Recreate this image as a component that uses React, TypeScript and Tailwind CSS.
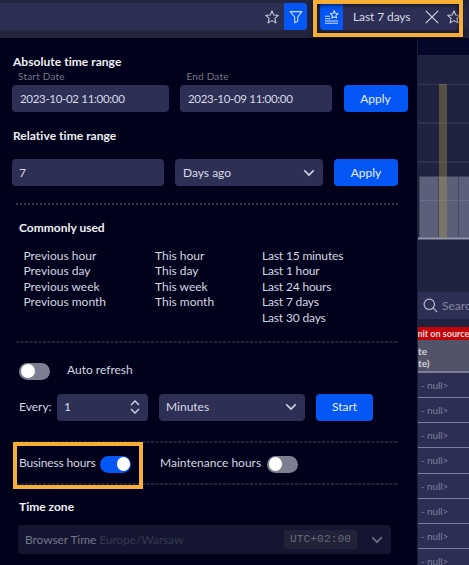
import React from "react";

const FIELD = "flex h-[27px] shrink-0 items-center rounded-[4px] bg-[#2d2f55] text-[#d9dae6]";
const BUTTON =
  "flex h-[27px] shrink-0 items-center justify-center rounded-[4px] bg-[#0557f5] text-[12px] leading-none text-[#e6edff]";

function Star({ className = "" }: { className?: string }) {
  return (
    <svg className={`shrink-0 ${className}`} width="14" height="14" viewBox="0 0 14 14" fill="none" stroke="#c6c8dc" strokeWidth="1.1" strokeLinejoin="round">
      <path d="M7 .9l1.8 4.1 4.4.4-3.3 3 1 4.5L7 10.6l-3.9 2.3 1-4.5-3.3-3 4.4-.4z" />
    </svg>
  );
}

function Chevron({ color = "#d4d6e4" }: { color?: string }) {
  return (
    <svg className="shrink-0" width="12" height="8" viewBox="0 0 12 8" fill="none" stroke={color} strokeWidth="1.6">
      <path d="M1.2 1.2L6 6l4.8-4.8" />
    </svg>
  );
}

function Dashes({ dotted = false }: { dotted?: boolean }) {
  return (
    <svg className="ml-4 block shrink-0" width="383" height="2" stroke="#454860">
      <path d="M0 1H383" strokeWidth={dotted ? 1.5 : 1} strokeDasharray={dotted ? "2 2" : "3 1.5"} />
    </svg>
  );
}

function Toggle({ on = false }: { on?: boolean }) {
  return (
    <span className={`flex h-[17px] w-[31px] shrink-0 items-center rounded-full px-[2px] ${on ? "justify-end bg-[#0557f5] pr-[1px]" : "bg-[#7c7e91]"}`}>
      <span className="size-[13.5px] rounded-full bg-white" />
    </span>
  );
}

function TopBar() {
  return (
    <header className="flex h-[38px] w-full shrink-0 items-start bg-[#23243f] pt-[3px]">
      <div className="flex h-[27px] w-[307px] shrink-0 items-center overflow-hidden rounded-r-[4px] bg-[#2c2e54]">
        <Star className="ml-[265px]" />
        <span className="ml-auto flex h-full w-[23px] items-center justify-center bg-[#0557f5]">
          <svg width="14" height="14" viewBox="0 0 14 14" fill="none" stroke="#c9dcff" strokeWidth="1.1" strokeLinejoin="round">
            <path d="M1.2 1.6h11.6L8.7 7v4.2l-3 1.6V7z" />
          </svg>
        </span>
      </div>
      <div className="ml-[13px] flex h-[27px] w-[146px] shrink-0 items-center overflow-hidden rounded-[4px] bg-[#2c2e54]">
        <span className="flex h-full w-[23px] shrink-0 items-center justify-center bg-[#0557f5]">
          <svg width="14" height="14" viewBox="0 0 14 14" fill="none" stroke="#c9dcff" strokeWidth="1.1" strokeLinejoin="round">
            <path d="M9.2.8l1.1 2.4 2.7.3-2 1.8.5 2.7-2.3-1.3L6.9 8l.5-2.7-2-1.8 2.7-.3zM0 6.2h5M0 8.7h5.5M0 11h13M0 13.3h13" />
          </svg>
        </span>
        <span className="ml-[10px] w-[68px] whitespace-nowrap text-[12px] leading-none tracking-[-0.1px] text-[#d9dae6]">Last 7 days</span>
        <svg className="ml-[4px] shrink-0" width="14" height="14" viewBox="0 0 14 14" stroke="#d3d4e1" strokeWidth="1.2">
          <path d="M.8.8l12.4 12.4M13.2.8L.8 13.2" />
        </svg>
        <Star className="ml-[8px]" />
      </div>
    </header>
  );
}

function Background() {
  const rows = [0, 1, 2, 3, 4, 5, 6, 7];
  return (
    <aside className="flex h-full w-[51px] shrink-0 flex-col overflow-hidden bg-[#20233f]">
      <div className="h-[17px] shrink-0 bg-[#04072a]" />
      <svg className="block shrink-0" width="51" height="237" viewBox="0 0 51 237">
        <path d="M0 29.3h51M0 68h51M0 107h51" stroke="#34364f" strokeWidth="1.3" />
        <path d="M1 121.5h50v62H1z" fill="#5c5f79" />
        <path d="M1 145.5h50" stroke="#6c6f87" />
        <path d="M1.5 122v61M20.5 122v61M40.5 122v61" stroke="#454861" />
        <path d="M21 29h8v155h-8z" fill="#a3954d" fillOpacity=".4" />
        <path d="M0 183.5h51" stroke="#9294a8" strokeWidth="1.8" />
      </svg>
      <div className="flex h-[27px] shrink-0 items-center bg-[#2d2f55]">
        <svg className="ml-[5px] shrink-0" width="15" height="15" viewBox="0 0 15 15" fill="none" stroke="#babccd" strokeWidth="1.2">
          <circle cx="6.3" cy="6.3" r="5.2" />
          <path d="M10.2 10.2l4 4" />
        </svg>
        <span className="ml-[4px] text-[12px] leading-none text-[#85879f]">Search</span>
      </div>
      <div className="mt-[8px] flex h-[13px] shrink-0 items-center whitespace-nowrap bg-[#c20508] text-[9px] font-bold leading-none text-[#efd5db]">
        <span className="-ml-[3px]">mit on source</span>
      </div>
      <div className="h-[33px] shrink-0 border-b-2 border-[#7c7e98] bg-[#525369] pt-[5px] text-[10px] font-bold leading-[12px] text-[#d3d4dd]">
        <div>te</div>
        <div>te)</div>
      </div>
      {rows.map((row) => (
        <div key={row} className="flex h-[25.15px] shrink-0 items-center border-b border-[#7b7d9e] bg-[#2c2e54] pl-[3px] text-[10px] leading-none tracking-[-0.1px] text-[#7d7f9a]">
          - null&gt;
        </div>
      ))}
    </aside>
  );
}

const PRESETS = [
  { width: "w-[131.5px]", items: ["Previous hour", "Previous day", "Previous week", "Previous month"] },
  { width: "w-[107px]", items: ["This hour", "This day", "This week", "This month"] },
  { width: "w-[120px] tracking-[-0.16px]", items: ["Last 15 minutes", "Last 1 hour", "Last 24 hours", "Last 7 days", "Last 30 days"] },
];

function TimePanel() {
  return (
    <main className="flex h-full w-[418px] shrink-0 flex-col overflow-hidden whitespace-nowrap border-r border-[#1e203b] bg-[#01011b] text-[12px] text-[#d5d6e0]">
      <h2 className="ml-[13px] mt-[16px] h-[16px] shrink-0 text-[12px] font-bold leading-[16px] tracking-[0.04px] text-[#f0f0f5]">Absolute time range</h2>
      <div className="flex h-[15px] shrink-0 pl-[18px] text-[10px] leading-[13px] tracking-[0.2px] text-[#777889]">
        <span className="w-[168.5px]">Start Date</span>
        <span>End Date</span>
      </div>
      <div className="flex shrink-0 pl-3">
        <div className={`${FIELD} w-[157px] pl-2 text-[11.5px] tracking-[-0.32px]`}>2023-10-02 11:00:00</div>
        <div className={`${FIELD} ml-[11px] w-[152px] pl-2 text-[11.5px] tracking-[-0.32px]`}>2023-10-09 11:00:00</div>
        <div className={`${BUTTON} ml-[11.5px] w-[64px]`}>Apply</div>
      </div>
      <h2 className="ml-[13px] mt-[16px] h-[16px] shrink-0 text-[12px] font-bold leading-[16px] tracking-[0.04px] text-[#f0f0f5]">Relative time range</h2>
      <div className="mt-[15px] flex shrink-0 pl-3">
        <div className={`${FIELD} w-[152px] pl-[7px]`}>7</div>
        <div className={`${FIELD} ml-[11px] w-[147.5px] justify-between pl-2 pr-2`}>
          <span>Days ago</span>
          <Chevron />
        </div>
        <div className={`${BUTTON} ml-[11.5px] w-[64px]`}>Apply</div>
      </div>
      <div className="h-[17px] shrink-0" />
      <Dashes dotted />
      <h2 className="ml-[19px] mt-[15px] h-[16px] shrink-0 text-[12px] font-bold leading-[16px] text-[#f0f0f5]">Commonly used</h2>
      <div className="mt-[12px] flex h-[80px] shrink-0 pl-[23.5px] leading-[15.4px]">
        {PRESETS.map((column) => (
          <ul key={column.items[0]} className={`${column.width} shrink-0`}>
            {column.items.map((item) => (
              <li key={item}>{item}</li>
            ))}
          </ul>
        ))}
      </div>
      <div className="h-[12.5px] shrink-0" />
      <Dashes />
      <div className="mt-[20px] flex h-[17px] shrink-0 items-center pl-[19px]">
        <Toggle />
        <span className="-mt-[3px] ml-[17px]">Auto refresh</span>
      </div>
      <div className="mt-[14px] flex shrink-0 items-center pl-[19px]">
        <span className="w-[38px] shrink-0">Every:</span>
        <div className={`${FIELD} w-[91px] justify-between pl-[7px] pr-2`}>
          <span>1</span>
          <svg width="10" height="14" viewBox="0 0 10 14" fill="none" stroke="#d4d6e4" strokeWidth="1.4">
            <path d="M1 5l4-4 4 4M1 9l4 4 4-4" />
          </svg>
        </div>
        <div className={`${FIELD} ml-[11px] w-[146px] justify-between pl-[7px] pr-2`}>
          <span>Minutes</span>
          <Chevron />
        </div>
        <div className={`${BUTTON} ml-[11px] w-[57px]`}>Start</div>
      </div>
      <div className="h-[20px] shrink-0" />
      <Dashes />
      <div className="mt-[13px] flex h-[17px] shrink-0 items-center pl-[19px]">
        <span className="-mt-[3px] w-[81px] shrink-0 tracking-[-0.15px]">Business hours</span>
        <Toggle on />
        <span className="-mt-[3px] ml-[29px] w-[106.5px] shrink-0">Maintenance hours</span>
        <Toggle />
      </div>
      <div className="h-[10.5px] shrink-0" />
      <Dashes />
      <h2 className="ml-[19px] mt-[14px] h-[16px] shrink-0 text-[12px] font-bold leading-[16px] text-[#f0f0f5]">Time zone</h2>
      <div className="ml-[18px] mt-[10px] flex h-[29px] w-[373px] shrink-0 items-center rounded-[4px] bg-[#141631] pl-[7px] pr-2">
        <span className="tracking-[-0.1px] text-[#737486]">Browser Time</span>
        <span className="ml-[3px] tracking-[-0.1px] text-[#34364d]">Europe/Warsaw</span>
        <span className="ml-auto flex h-[19.5px] w-[73px] items-center justify-center rounded-[2px] bg-[#202238] font-['Liberation_Mono',monospace] text-[11.3px] leading-none text-[#67697c]">
          UTC+02:00
        </span>
        <span className="ml-[14px]">
          <Chevron color="#737588" />
        </span>
      </div>
    </main>
  );
}

export default function App() {
  return (
    <div className="relative flex h-[565px] w-[469px] flex-col overflow-hidden bg-[#01011b] font-['Lato','Noto_Sans',sans-serif]">
      <TopBar />
      <div className="flex h-[527px] w-full">
        <TimePanel />
        <Background />
      </div>
      <div className="absolute left-[313px] top-0 h-[37px] w-[150px] border-4 border-[#f6ae35] shadow-[0_1px_4px_rgba(0,0,0,0.7),inset_0_1px_4px_rgba(0,0,0,0.7)]" />
      <div className="absolute left-[13px] top-[442px] h-[46.5px] w-[130px] border-4 border-[#f6ae35]" />
    </div>
  );
}
